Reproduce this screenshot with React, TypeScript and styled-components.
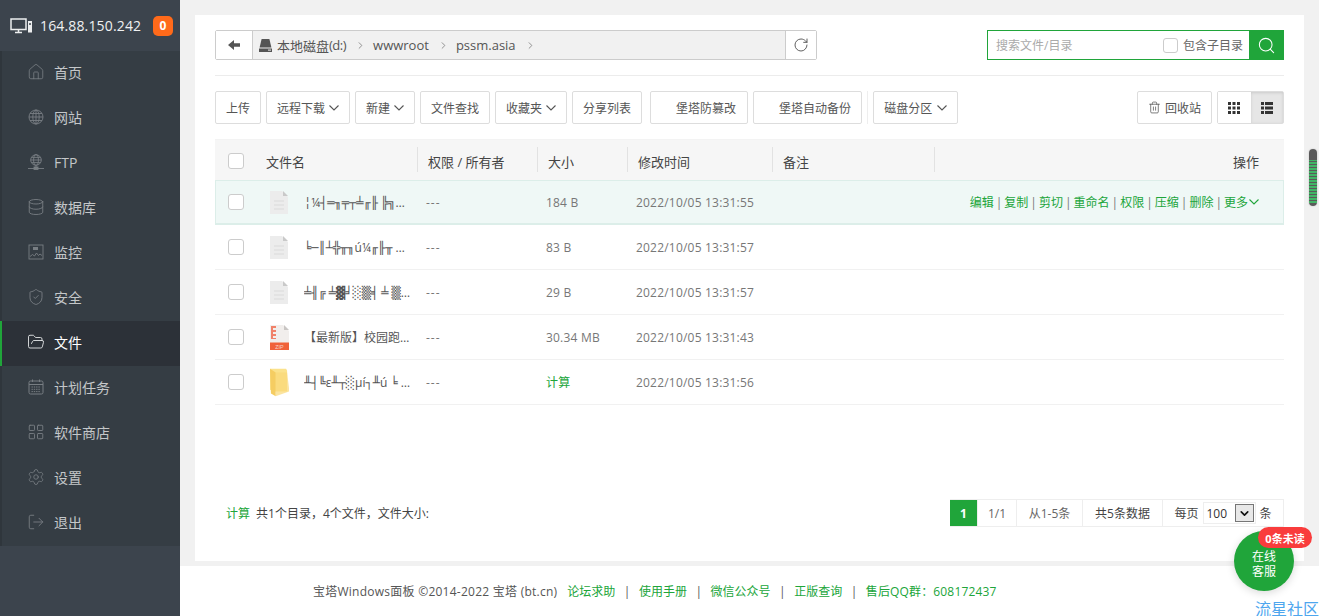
import React from 'react';
import styled, { createGlobalStyle } from 'styled-components';
import {
  ChevronDown,
  ChevronRight,
  Database,
  FolderOpen,
  Home,
  LayoutGrid,
  LogOut,
  RotateCw,
  Search,
  Settings,
  ShieldCheck,
  Trash2,
} from 'lucide-react';

const GREEN = '#20a53a';
const COLUMNS = '202px 120px 90px 145px 162px 1fr';

const GlobalStyle = createGlobalStyle`
  html, body {
    margin: 0;
    height: 100%;
    overflow: hidden;
  }
  body {
    font-family: "Open Sans", "Noto Sans CJK SC", sans-serif;
    font-size: 12px;
    color: #666;
    background: #f1f1f1;
  }
  * {
    box-sizing: border-box;
  }
`;

const Layout = styled.div`
  display: flex;
  height: 616px;
  position: relative;
  overflow: hidden;
`;

const Sidebar = styled.aside`
  width: 180px;
  flex-shrink: 0;
  background: #3c444d;
`;

const ServerHead = styled.div`
  height: 51px;
  display: flex;
  align-items: center;
  padding: 0 7px 0 10px;
  color: #f0f1f2;
  font-size: 14px;
`;

const ServerIp = styled.span`
  margin-left: 7px;
  flex: 1;
  letter-spacing: 0.15px;
`;

const Badge = styled.span`
  width: 20px;
  height: 20px;
  border-radius: 5px;
  background: #ff6a1a;
  color: #fff;
  font-weight: 700;
  font-size: 12px;
  display: flex;
  align-items: center;
  justify-content: center;
`;

const Menu = styled.nav`
  background: #353d44;
`;

const MenuItem = styled.div<{ $active?: boolean }>`
  height: 45px;
  display: flex;
  align-items: center;
  gap: 9px;
  padding: 0 0 3px 25px;
  border-left: 2px solid ${(p) => (p.$active ? GREEN : '#2f363c')};
  background: ${(p) => (p.$active ? '#2c3138' : 'transparent')};
  color: ${(p) => (p.$active ? '#fff' : '#c4c7c9')};
  font-size: 14px;

  svg {
    width: 18px;
    height: 18px;
    flex-shrink: 0;
    color: ${(p) => (p.$active ? '#e4e6e8' : '#787e83')};
  }
`;

const Main = styled.main`
  flex: 1;
  min-width: 0;
  display: flex;
  flex-direction: column;
`;

const Content = styled.div`
  height: 566px;
  padding: 15px 15px 5px;
`;

const Panel = styled.section`
  height: 100%;
  background: #fff;
  padding: 15px 20px 0;
  display: flex;
  flex-direction: column;
`;

const TopBar = styled.div`
  display: flex;
  justify-content: space-between;
  height: 46px;
  padding-bottom: 15px;
  border-bottom: 1px solid #ececec;
`;

const PathBox = styled.div`
  width: 602px;
  display: flex;
  border: 1px solid #ccc;
  border-radius: 2px;
`;

const IconCell = styled.div<{ $w: number }>`
  width: ${(p) => p.$w}px;
  flex-shrink: 0;
  display: flex;
  align-items: center;
  justify-content: center;
  color: #555;
  background: #fff;
`;

const PathTrail = styled.div`
  flex: 1;
  display: flex;
  align-items: center;
  padding-left: 6px;
  background: #f1f1f1;
  border-left: 1px solid #ccc;
  border-right: 1px solid #ccc;
  color: #555;
  font-size: 13px;
`;

const Crumb = styled.span`
  display: flex;
  align-items: center;
  white-space: nowrap;

  svg {
    margin: 0 7px 0 9px;
    color: #888;
  }
`;

const DriveCrumb = styled(Crumb)`
  margin-left: 5px;
`;

const DriveLetter = styled.span`
  letter-spacing: -0.5px;
`;

const SearchBox = styled.div`
  width: 297px;
  display: flex;
  align-items: center;
  border: 1px solid ${GREEN};
  padding-left: 8px;
`;

const SearchHint = styled.span`
  flex: 1;
  color: #aaa;
`;

const CheckMark = styled.span<{ $size?: number }>`
  display: block;
  width: ${(p) => p.$size ?? 15}px;
  height: ${(p) => p.$size ?? 15}px;
  flex-shrink: 0;
  border: 1px solid #ccc;
  border-radius: 3px;
  background: #fff;
`;

const SearchLabel = styled.span`
  margin: 0 6px 0 5px;
  color: #666;
`;

const SearchButton = styled.div`
  width: 35px;
  height: 30px;
  margin: -1px -1px -1px 0;
  background: ${GREEN};
  color: #fff;
  display: flex;
  align-items: center;
  justify-content: center;
`;

const Toolbar = styled.div`
  display: flex;
  align-items: center;
  gap: 5px;
  padding: 15px 0;
  border-bottom: 1px solid #f3f3f3;
  height: 64px;
`;

const ToolButton = styled.div<{ $indent?: number; $end?: number }>`
  height: 33px;
  display: flex;
  align-items: center;
  gap: 4px;
  padding: 0 ${(p) => p.$end ?? 10}px 0 ${(p) => p.$indent ?? 10}px;
  border: 1px solid #ddd;
  border-radius: 2px;
  background: #fff;
  color: #555;
  white-space: nowrap;
`;

const GuardButton = styled(ToolButton)`
  margin-left: 3px;
`;

const DiskCaret = styled.span`
  display: flex;
  margin-left: 1px;
`;

const ToolDivider = styled.span`
  width: 1px;
  height: 33px;
  background: #eee;
`;

const ToolSpacer = styled.div`
  flex: 1;
`;

const ViewSwitch = styled.div`
  display: flex;
  width: 67px;
  height: 33px;
  border: 1px solid #ddd;
  border-radius: 2px;
`;

const ViewCell = styled.div<{ $on?: boolean }>`
  flex: 1;
  display: flex;
  align-items: center;
  justify-content: center;
  background: ${(p) => (p.$on ? '#e6e6e6' : '#fff')};
  box-shadow: ${(p) => (p.$on ? 'inset 0 1px 3px rgba(0,0,0,.12)' : 'none')};
`;

const HeadRow = styled.div`
  display: grid;
  grid-template-columns: ${COLUMNS};
  height: 40px;
  padding-top: 2px;
  background: #f6f6f6;
  color: #444;
  font-size: 13px;
`;

const HeadCell = styled.div<{ $end?: boolean; $first?: boolean }>`
  position: relative;
  display: flex;
  align-items: center;
  justify-content: ${(p) => (p.$end ? 'flex-end' : 'flex-start')};
  padding: ${(p) => (p.$first ? '0 0 0 13px' : p.$end ? '0 25px 0 0' : '0 0 0 11px')};
  white-space: nowrap;

  &::before {
    content: ${(p) => (p.$first ? 'none' : '""')};
    position: absolute;
    left: 0;
    top: 5px;
    bottom: 8px;
    width: 1px;
    background: #e2e2e2;
  }
`;

const HeadName = styled.span`
  margin-left: 22px;
`;

const FileRow = styled.div<{ $hot?: boolean }>`
  display: grid;
  grid-template-columns: ${COLUMNS};
  height: 45px;
  background: ${(p) => (p.$hot ? '#eff8f6' : '#fff')};
  border-bottom: 1px solid ${(p) => (p.$hot ? '#dceee9' : '#f1f1f1')};
  box-shadow: ${(p) => (p.$hot ? 'inset 0 0 0 1px #dceee9' : 'none')};
  color: #777;
`;

const Cell = styled.div`
  display: flex;
  align-items: center;
  padding-left: 9px;
  min-width: 0;
  white-space: nowrap;
  letter-spacing: 0.2px;
`;

const Dash = styled.span`
  letter-spacing: 1px;
`;

const NameCell = styled.div`
  display: flex;
  align-items: center;
  padding-left: 13px;
  min-width: 0;
`;

const FileIcon = styled.span`
  margin: 0 15px 0 26px;
  width: 19px;
  flex-shrink: 0;
  display: flex;
  justify-content: center;
`;

const FileName = styled.span`
  width: 107px;
  overflow: hidden;
  white-space: nowrap;
  text-overflow: ellipsis;
  color: #555;
  font-family: "Open Sans", "DejaVu Sans", "Noto Sans CJK SC", sans-serif;
`;

const CalcLink = styled.span`
  color: ${GREEN};
`;

const Ops = styled.div`
  display: flex;
  align-items: center;
  justify-content: flex-end;
  padding-right: 25px;
  color: #777;
  white-space: nowrap;

  a {
    color: ${GREEN};
  }

  i {
    font-style: normal;
    margin: 0 2px;
  }
`;

const MoreCaret = styled.span`
  display: flex;
  margin-left: 1px;
  color: ${GREEN};
`;

const ListFoot = styled.div`
  flex: 1;
  display: flex;
  justify-content: space-between;
  align-items: flex-start;
  padding: 94px 0 0 11px;
`;

const Summary = styled.div`
  display: flex;
  align-items: center;
  gap: 6px;
  height: 28px;
  color: #444;
`;

const Pager = styled.div`
  display: flex;
  height: 28px;
  border: 1px solid #eee;
  border-left: none;
`;

const PagerCell = styled.div<{ $w: number; $on?: boolean }>`
  width: ${(p) => p.$w}px;
  display: flex;
  align-items: center;
  justify-content: center;
  gap: 4px;
  border-right: 1px solid #eee;
  background: ${(p) => (p.$on ? GREEN : '#fff')};
  color: ${(p) => (p.$on ? '#fff' : '#666')};
  font-weight: ${(p) => (p.$on ? 700 : 400)};

  &:last-child {
    border-right: none;
  }
`;

const DarkText = styled.span`
  color: #444;
`;

const PageSize = styled.div`
  width: 53px;
  height: 22px;
  display: flex;
  align-items: center;
  justify-content: space-between;
  padding-left: 3px;
  border: 1px solid #eee;
  color: #333;
`;

const SizeArrow = styled.span`
  width: 19px;
  height: 18px;
  margin-right: 1px;
  display: flex;
  align-items: center;
  justify-content: center;
  background: #e8e8e8;
  border: 1px solid #767676;
  color: #111;
`;

const Footer = styled.footer`
  height: 50px;
  background: #fff;
  display: flex;
  align-items: center;
  padding: 0 0 0 133px;
  color: #555;
  white-space: nowrap;
`;

const FooterLink = styled.span`
  color: ${GREEN};
`;

const ServiceLink = styled(FooterLink)`
  letter-spacing: 0.15px;
`;

const FooterSep = styled.span`
  margin: 0 8.5px;
`;

const Copyright = styled.span`
  margin-right: 10px;
  letter-spacing: 0.25px;
`;

const ScrollThumb = styled.div`
  position: absolute;
  left: 1309px;
  top: 149px;
  width: 8px;
  height: 57px;
  border-radius: 4px;
  background:
    linear-gradient(#5a5a5a 0 11px, transparent 11px 54px, #5a5a5a 54px),
    repeating-linear-gradient(#5a5a5a 0 1px, #41b565 1px 3px);
  box-shadow: 0 0 2px rgba(0, 0, 0, 0.2);
`;

const ChatBubble = styled.div`
  position: absolute;
  left: 1234px;
  top: 531px;
  width: 60px;
  height: 60px;
  border-radius: 50%;
  background: ${GREEN};
  color: #fff;
  line-height: 15px;
  display: flex;
  align-items: center;
  justify-content: center;
  text-align: center;
  padding-top: 5px;
  box-shadow: 0 2px 8px rgba(0, 0, 0, 0.15);
`;

const UnreadTag = styled.div`
  position: absolute;
  left: 1258px;
  top: 527px;
  width: 54px;
  height: 21px;
  border-radius: 11px;
  background: #f93c3c;
  color: #fff;
  font-size: 11px;
  font-weight: 700;
  display: flex;
  align-items: center;
  justify-content: center;
  white-space: nowrap;
`;

const Watermark = styled.div`
  position: absolute;
  left: 1255px;
  top: 598px;
  color: #4ea6ee;
  font-size: 16px;
  line-height: 22px;
  white-space: nowrap;
`;

const Caret = () => (
  <svg width="10" height="6" viewBox="0 0 10 6" fill="none" stroke="currentColor" strokeWidth="1.1">
    <path d="M.5.5 5 5l4.5-4.5" />
  </svg>
);

const MonitorIcon = () => (
  <svg width="23" height="16" viewBox="0 0 23 16" fill="none" stroke="#eceeef" strokeWidth="1.5">
    <rect x="1" y="1" width="15" height="10.5" />
    <path d="M5 14.5h7M8.5 12v2" />
    <rect x="18" y="3" width="4" height="11.5" fill="#eceeef" stroke="none" />
    <path d="M19 6h2" stroke="#3c444d" />
  </svg>
);

const GlobeIcon = () => (
  <svg viewBox="-1 -1 18 18" fill="none" stroke="currentColor" strokeWidth="0.9">
    <circle cx="8" cy="8" r="7" />
    <ellipse cx="8" cy="8" rx="3.2" ry="7" />
    <path d="M1 8h14M2 4.5h12M2 11.5h12M8 1v14" />
  </svg>
);

const FtpIcon = () => (
  <svg viewBox="-1 -1 18 18" fill="none" stroke="currentColor" strokeWidth="0.9">
    <circle cx="8" cy="6" r="5.3" />
    <ellipse cx="8" cy="6" rx="2.4" ry="5.3" />
    <path d="M2.7 6h10.6M3.5 3.4h9M3.5 8.6h9M8 11.5v2M0 14.5h6M10 14.5h6" />
    <rect x="6" y="13" width="4" height="2.4" fill="currentColor" />
  </svg>
);

const PulseIcon = () => (
  <svg viewBox="-1 -1 18 18" fill="none" stroke="currentColor" strokeWidth="0.9">
    <rect x="1" y="1" width="14" height="14" />
    <path d="M2 12.5l2.5-2 2 1.5 2-3 2 2.5 1.5-1.5 2 1.5" />
    <rect x="5" y="3" width="5" height="3" fill="currentColor" stroke="none" />
  </svg>
);

const CalendarIcon = () => (
  <svg viewBox="-1 -1 18 18" fill="none" stroke="currentColor" strokeWidth="1">
    <rect x="1" y="2" width="14" height="13" rx="1.5" />
    <path d="M1 5.5h14M4.5 0.5v2.5M11.5 0.5v2.5" />
    <path d="M3.5 8h9M3.5 10.3h9M3.5 12.6h9" strokeDasharray="1.4 0.9" />
  </svg>
);

const BackArrow = () => (
  <svg width="12" height="10" viewBox="0 0 12 10">
    <path d="M0 5l6-5v3.2h6v3.6H6V10z" fill="#555" />
  </svg>
);

const GridDots = () => (
  <svg width="12" height="12" viewBox="0 0 12 12" fill="#333">
    <rect x="0" y="0" width="3" height="3" />
    <rect x="4.5" y="0" width="3" height="3" />
    <rect x="9" y="0" width="3" height="3" />
    <rect x="0" y="4.5" width="3" height="3" />
    <rect x="4.5" y="4.5" width="3" height="3" />
    <rect x="9" y="4.5" width="3" height="3" />
    <rect x="0" y="9" width="3" height="3" />
    <rect x="4.5" y="9" width="3" height="3" />
    <rect x="9" y="9" width="3" height="3" />
  </svg>
);

const ListRows = () => (
  <svg width="12" height="12" viewBox="0 0 12 12" fill="#333">
    <rect x="0" y="0" width="3" height="3" />
    <rect x="4" y="0" width="8" height="3" />
    <rect x="0" y="4.5" width="3" height="3" />
    <rect x="4" y="4.5" width="8" height="3" />
    <rect x="0" y="9" width="3" height="3" />
    <rect x="4" y="9" width="8" height="3" />
  </svg>
);

const DriveIcon = () => (
  <svg width="13" height="13" viewBox="0 0 13 13">
    <path d="M2.6 0h7.8l2 8.5H.6z" fill="#555" />
    <rect x="0" y="9.5" width="13" height="3.5" fill="#555" />
    <rect x="9" y="10.6" width="3" height="1" fill="#eee" />
  </svg>
);

const DocIcon = () => (
  <svg width="19" height="25" viewBox="0 0 19 25">
    <path d="M0 1h12l6 6v17H0z" fill="#ececec" />
    <path d="M13 1l5 5h-5z" fill="#c9c9c9" />
    <path d="M4 11h10M4 15h10M4 19h10" stroke="#dadada" strokeWidth="1" />
  </svg>
);

const ZipIcon = () => (
  <svg width="19" height="25" viewBox="0 0 19 25">
    <path d="M0 0h13l6 6v19H0z" fill="#f1eeec" />
    <path d="M14 0l5 5h-5z" fill="#c9c6c4" />
    <path d="M1 1h5v2H3v2h3v2H3v2h3v2H3v2h3v1H1z" fill="#f0826a" />
    <rect x="0" y="17.5" width="19" height="7.5" fill="#f0623a" />
    <text x="9.5" y="23.6" fontSize="5.4" fill="#f7d4c8" textAnchor="middle" fontFamily="Liberation Sans">ZIP</text>
  </svg>
);

const FolderIcon = () => (
  <svg width="20" height="29" viewBox="0 0 20 29">
    <path d="M0 0h17l1 2v22H4L0 22z" fill="#fbe28c" />
    <path d="M0 0l6 4v25L1 26z" fill="#f5cd62" />
    <path d="M6 4v25l14-5V20L18 4z" fill="#fad978" opacity="0.7" />
  </svg>
);

const menu = [
  { label: '首页', icon: <Home strokeWidth={1.1} /> },
  { label: '网站', icon: <GlobeIcon /> },
  { label: 'FTP', icon: <FtpIcon /> },
  { label: '数据库', icon: <Database strokeWidth={1.2} /> },
  { label: '监控', icon: <PulseIcon /> },
  { label: '安全', icon: <ShieldCheck strokeWidth={1.2} /> },
  { label: '文件', icon: <FolderOpen strokeWidth={1.2} />, active: true },
  { label: '计划任务', icon: <CalendarIcon /> },
  { label: '软件商店', icon: <LayoutGrid strokeWidth={1.2} /> },
  { label: '设置', icon: <Settings strokeWidth={1.1} /> },
  { label: '退出', icon: <LogOut strokeWidth={1.2} /> },
];

const files = [
  { name: '╎¼┤═╖╤┬╧╓╟ ╠╗╔╠╗╚╠╗╔', icon: <DocIcon />, size: '184 B', time: '2022/10/05 13:31:55', hot: true },
  { name: ' ╘─║┴╬╥╖ú¼╓╟╥ ╖╒╒╥╖╒', icon: <DocIcon />, size: '83 B', time: '2022/10/05 13:31:57' },
  { name: '╧╢╔ ╧▓╛░▒╡ ╧ ▒╙╤╔╧▓╛', icon: <DocIcon />, size: '29 B', time: '2022/10/05 13:31:57' },
  { name: '【最新版】校园跑腿小程序源码', icon: <ZipIcon />, size: '30.34 MB', time: '2022/10/05 13:31:43' },
  { name: '╨┤╚ε╨┬░µí┐╨ú ╘ ░╘╨┤╚ε', icon: <FolderIcon />, size: '', time: '2022/10/05 13:31:56' },
];

const ops = ['编辑', '复制', '剪切', '重命名', '权限', '压缩', '删除'];

const App: React.FC = () => {
  return (
    <Layout>
      <GlobalStyle />
      <Sidebar>
        <ServerHead>
          <MonitorIcon />
          <ServerIp>164.88.150.242</ServerIp>
          <Badge>0</Badge>
        </ServerHead>
        <Menu>
          {menu.map((item) => (
            <MenuItem key={item.label} $active={item.active}>
              {item.icon}
              {item.label}
            </MenuItem>
          ))}
        </Menu>
      </Sidebar>

      <Main>
        <Content>
          <Panel>
            <TopBar>
              <PathBox>
                <IconCell $w={36}>
                  <BackArrow />
                </IconCell>
                <PathTrail>
                  <DriveIcon />
                  <DriveCrumb>
                    本地磁盘<DriveLetter>(d:)</DriveLetter>
                    <ChevronRight size={11} strokeWidth={2} />
                  </DriveCrumb>
                  <Crumb>
                    wwwroot
                    <ChevronRight size={11} strokeWidth={2} />
                  </Crumb>
                  <Crumb>
                    pssm.asia
                    <ChevronRight size={11} strokeWidth={2} />
                  </Crumb>
                </PathTrail>
                <IconCell $w={30}>
                  <RotateCw size={16} strokeWidth={1.4} />
                </IconCell>
              </PathBox>
              <SearchBox>
                <SearchHint>搜索文件/目录</SearchHint>
                <CheckMark $size={15} />
                <SearchLabel>包含子目录</SearchLabel>
                <SearchButton>
                  <Search size={19} strokeWidth={1.3} />
                </SearchButton>
              </SearchBox>
            </TopBar>

            <Toolbar>
              <ToolButton>上传</ToolButton>
              <ToolButton>
                远程下载
                <Caret />
              </ToolButton>
              <ToolButton>
                新建
                <Caret />
              </ToolButton>
              <ToolButton>文件查找</ToolButton>
              <ToolButton>
                收藏夹
                <Caret />
              </ToolButton>
              <ToolButton>分享列表</ToolButton>
              <GuardButton $indent={25} $end={11}>堡塔防篡改</GuardButton>
              <ToolButton $indent={25}>堡塔自动备份</ToolButton>
              <ToolDivider />
              <ToolButton>
                磁盘分区
                <DiskCaret>
                  <Caret />
                </DiskCaret>
              </ToolButton>
              <ToolSpacer />
              <ToolButton>
                <Trash2 size={13} strokeWidth={1.4} />
                回收站
              </ToolButton>
              <ViewSwitch>
                <ViewCell>
                  <GridDots />
                </ViewCell>
                <ViewCell $on>
                  <ListRows />
                </ViewCell>
              </ViewSwitch>
            </Toolbar>

            <HeadRow>
              <HeadCell $first>
                <CheckMark $size={16} />
                <HeadName>文件名</HeadName>
              </HeadCell>
              <HeadCell>权限 / 所有者</HeadCell>
              <HeadCell>大小</HeadCell>
              <HeadCell>修改时间</HeadCell>
              <HeadCell>备注</HeadCell>
              <HeadCell $end>操作</HeadCell>
            </HeadRow>

            {files.map((file) => (
              <FileRow key={file.time + file.name} $hot={file.hot}>
                <NameCell>
                  <CheckMark $size={16} />
                  <FileIcon>{file.icon}</FileIcon>
                  <FileName>{file.name}</FileName>
                </NameCell>
                <Cell>
                  <Dash>---</Dash>
                </Cell>
                <Cell>{file.size || <CalcLink>计算</CalcLink>}</Cell>
                <Cell>{file.time}</Cell>
                <Cell />
                {file.hot ? (
                  <Ops>
                    {ops.map((op) => (
                      <React.Fragment key={op}>
                        <a>{op}</a>
                        <i>|</i>
                      </React.Fragment>
                    ))}
                    <a>更多</a>
                    <MoreCaret>
                      <Caret />
                    </MoreCaret>
                  </Ops>
                ) : (
                  <Cell />
                )}
              </FileRow>
            ))}

            <ListFoot>
              <Summary>
                <CalcLink>计算</CalcLink>
                共1个目录，4个文件，文件大小:
              </Summary>
              <Pager>
                <PagerCell $w={28} $on>1</PagerCell>
                <PagerCell $w={39}>1/1</PagerCell>
                <PagerCell $w={66}>从1-5条</PagerCell>
                <PagerCell $w={80}><DarkText>共5条数据</DarkText></PagerCell>
                <PagerCell $w={120}>
                  <DarkText>每页</DarkText>
                  <PageSize>
                    100
                    <SizeArrow>
                      <ChevronDown size={13} strokeWidth={3} />
                    </SizeArrow>
                  </PageSize>
                  <DarkText>条</DarkText>
                </PagerCell>
              </Pager>
            </ListFoot>
          </Panel>
        </Content>

        <Footer>
          <Copyright>宝塔Windows面板 ©2014-2022 宝塔 (bt.cn)</Copyright>
          <FooterLink>论坛求助</FooterLink>
          <FooterSep>|</FooterSep>
          <FooterLink>使用手册</FooterLink>
          <FooterSep>|</FooterSep>
          <FooterLink>微信公众号</FooterLink>
          <FooterSep>|</FooterSep>
          <FooterLink>正版查询</FooterLink>
          <FooterSep>|</FooterSep>
          <ServiceLink>售后QQ群：608172437</ServiceLink>
        </Footer>
      </Main>

      <ScrollThumb />
      <ChatBubble>
        在线
        <br />
        客服
      </ChatBubble>
      <UnreadTag>0条未读</UnreadTag>
      <Watermark>流星社区</Watermark>
    </Layout>
  );
};

export default App;
